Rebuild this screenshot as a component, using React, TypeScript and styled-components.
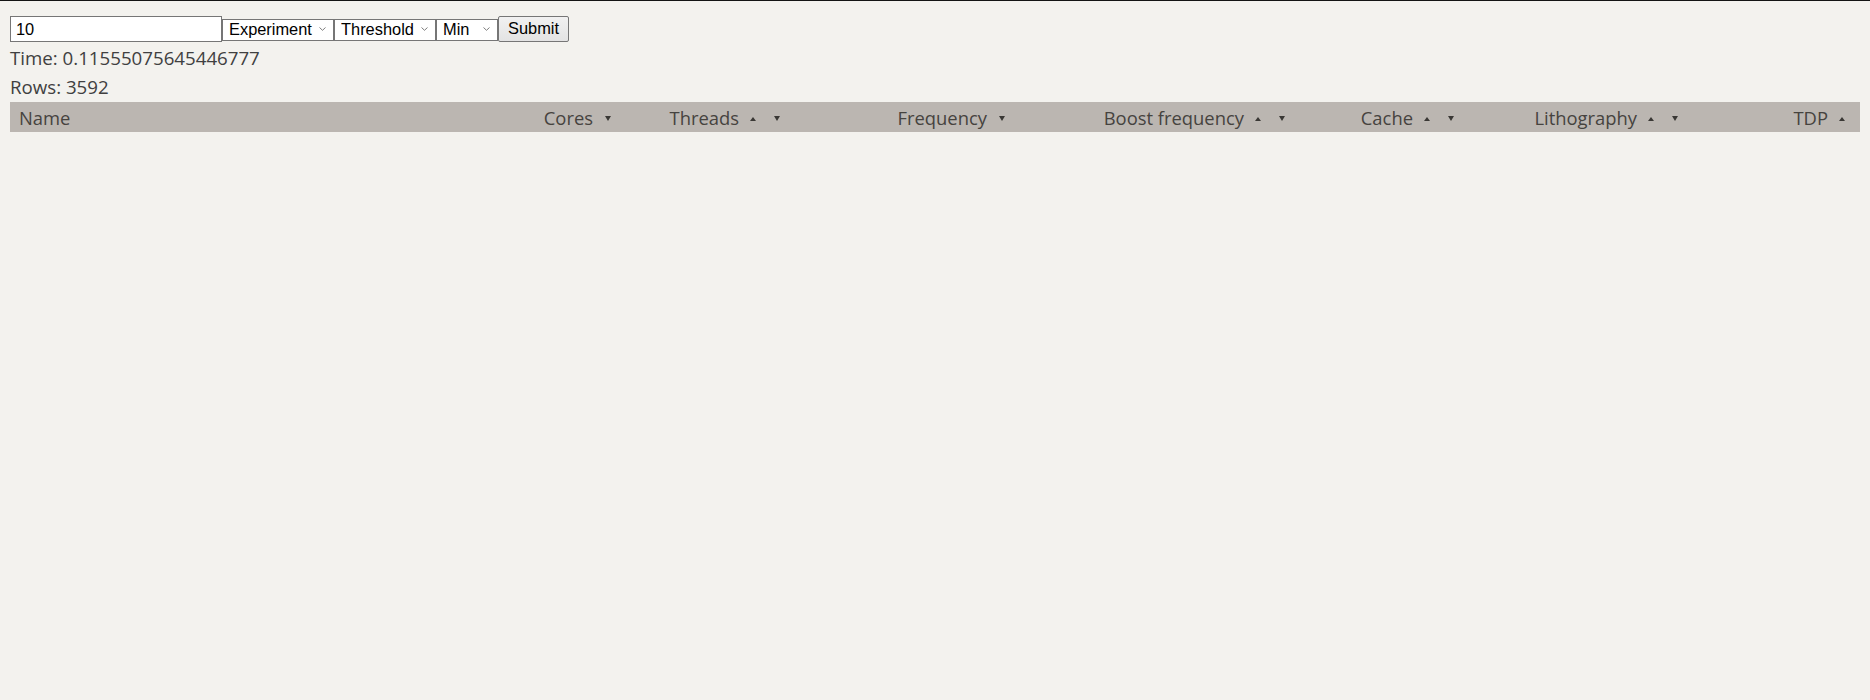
import React from "react";
import styled, { createGlobalStyle } from "styled-components";

const GlobalStyle = createGlobalStyle`
  html, body {
    margin: 0;
    padding: 0;
    background: #f3f2ee;
  }
  body {
    font-family: "Open Sans", "Noto Sans", sans-serif;
  }
`;

const Page = styled.div`
  min-height: 699px;
  border-top: 1px solid #141414;
  padding: 15px 10px 0 10px;
  background: #f3f2ee;
  color: #404040;
  font-family: "Open Sans", "Noto Sans", sans-serif;
`;

const Form = styled.form`
  display: flex;
  align-items: center;
  height: 26px;
`;

const TextInput = styled.input`
  box-sizing: border-box;
  width: 212px;
  height: 26px;
  margin: 0;
  padding: 0 0 0 5px;
  border: 1px solid #767676;
  background: #fff;
  font-family: "Liberation Sans", Arial, sans-serif;
  font-size: 16.4px;
  color: #000;
  outline: none;
`;

const SelectWrap = styled.div<{ $w: number }>`
  position: relative;
  width: ${(p) => p.$w}px;
  height: 22px;
`;

const Select = styled.select`
  box-sizing: border-box;
  appearance: none;
  -webkit-appearance: none;
  width: 100%;
  height: 22px;
  margin: 0;
  padding: 0 0 1px 6px;
  border: 1px solid #767676;
  border-radius: 0;
  background: #fff;
  font-family: "Liberation Sans", Arial, sans-serif;
  font-size: 16.4px;
  line-height: 19px;
  color: #000;
  outline: none;
`;

const Chevron = styled.svg`
  position: absolute;
  right: 8px;
  top: 9px;
  width: 7px;
  height: 4px;
  pointer-events: none;
`;

const SubmitButton = styled.button`
  box-sizing: border-box;
  width: 71px;
  height: 26px;
  margin: 0;
  padding: 0 0 1px 0;
  border: 1px solid #767676;
  border-radius: 2px;
  background: linear-gradient(#f1f1f1, #e3e3e3);
  font-family: "Liberation Sans", Arial, sans-serif;
  font-size: 16.4px;
  color: #000;
`;

const InfoLine = styled.div<{ $offset: number }>`
  margin-top: ${(p) => p.$offset}px;
  font-size: 18.7px;
  line-height: 28px;
  color: #404040;
`;

const Info = styled.div`
  margin-top: 2px;
`;

const Header = styled.div`
  margin-top: 1px;
  display: grid;
  grid-template-columns: 460px 149px 169px 225px 280px 169px 224px 1fr;
  height: 30px;
  padding-right: 7px;
  background: #bbb6b1;
  color: #46433f;
  font-size: 18.4px;
  line-height: 30px;
`;

const HeaderCell = styled.div<{ $align: "left" | "right" }>`
  box-sizing: border-box;
  display: flex;
  align-items: center;
  height: 30px;
  justify-content: ${(p) => (p.$align === "left" ? "flex-start" : "flex-end")};
  padding: ${(p) => (p.$align === "left" ? "1px 0 0 9px" : "1px 8px 0 0")};
  white-space: nowrap;
`;

const Label = styled.span`
  display: inline-block;
  line-height: 29px;
`;

const Arrow = styled.span<{ $dir: "up" | "down"; $gap: number }>`
  display: inline-block;
  width: 0;
  height: 0;
  margin-left: ${(p) => p.$gap}px;
  margin-top: ${(p) => (p.$dir === "up" ? "2px" : "1px")};
  border-left: ${(p) => (p.$dir === "up" ? 3 : 3.5)}px solid transparent;
  border-right: ${(p) => (p.$dir === "up" ? 3 : 3.5)}px solid transparent;
  ${(p) =>
    p.$dir === "up"
      ? "border-bottom: 4px solid #3a3835;"
      : "border-top: 5px solid #3a3835;"}
`;

type Col = { name: string; up?: boolean; down?: boolean };

const columns: Col[] = [
  { name: "Cores", down: true },
  { name: "Threads", up: true, down: true },
  { name: "Frequency", down: true },
  { name: "Boost frequency", up: true, down: true },
  { name: "Cache", up: true, down: true },
  { name: "Lithography", up: true, down: true },
  { name: "TDP", up: true },
];

const DropSelect: React.FC<{ width: number; options: string[] }> = ({ width, options }) => (
  <SelectWrap $w={width}>
    <Select defaultValue={options[0]}>
      {options.map((o) => (
        <option key={o}>{o}</option>
      ))}
    </Select>
    <Chevron viewBox="0 0 7 4">
      <path d="M0.5 0.5 L3.5 3.3 L6.5 0.5" fill="none" stroke="#6e6e6e" strokeWidth="0.9" />
    </Chevron>
  </SelectWrap>
);

export default function App() {
  return (
    <>
      <GlobalStyle />
      <Page>
        <Form onSubmit={(e) => e.preventDefault()}>
          <TextInput type="text" defaultValue="10" />
          <DropSelect width={112} options={["Experiment"]} />
          <DropSelect width={102} options={["Threshold"]} />
          <DropSelect width={62} options={["Min"]} />
          <SubmitButton type="submit">Submit</SubmitButton>
        </Form>
        <Info>
          <InfoLine $offset={0}>Time: 0.11555075645446777</InfoLine>
          <InfoLine $offset={1}>Rows: 3592</InfoLine>
        </Info>
        <Header>
          <HeaderCell $align="left">
            <Label>Name</Label>
          </HeaderCell>
          {columns.map((c) => (
            <HeaderCell key={c.name} $align="right">
              <Label>{c.name}</Label>
              {c.up && <Arrow $dir="up" $gap={11} />}
              {c.down && <Arrow $dir="down" $gap={c.up ? 18 : 12} />}
            </HeaderCell>
          ))}
        </Header>
      </Page>
    </>
  );
}
